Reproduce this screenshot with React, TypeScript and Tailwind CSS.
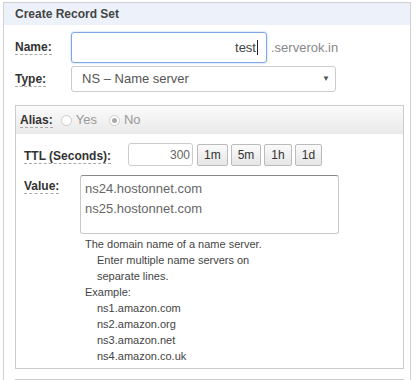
import React from "react";

function Label({ children }: { children: React.ReactNode }) {
  return (
    <span className="font-bold text-[12px] text-[#333] border-b border-dashed border-[#aaa] leading-[14px]">
      {children}
    </span>
  );
}

function Btn({ children }: { children: React.ReactNode }) {
  return (
    <div className="h-[22px] px-[6px] flex items-center border border-[#bbb] rounded-[2px] bg-gradient-to-b from-[#fafafa] to-[#e6e6e6] text-[12px] text-[#333]">
      {children}
    </div>
  );
}

export default function App() {
  return (
    <div className="w-[416px] h-[380px] bg-white overflow-hidden font-['Liberation_Sans',Arial,sans-serif]">
      <div className="ml-[3px] mt-[2px] w-[408px] h-[400px] border border-[#d0d0d0]">
        <div className="h-[22px] bg-[#edf2fa] pl-[11px] flex items-center text-[12px] font-bold text-[#444]">
          Create Record Set
        </div>
        <div className="pl-[11px] pt-[7px]">
          <div className="flex items-center h-[31px]">
            <div className="w-[56px] flex items-center">
              <Label>Name:</Label>
            </div>
            <div className="w-[196px] h-[31px] border border-[#7ea7e8] rounded-[3px] shadow-[0_0_2px_#9dbff0] flex items-center justify-end pr-[8px] text-[13px] text-[#444]">
              test<span className="w-px h-[15px] bg-[#222] ml-[1px]" />
            </div>
            <span className="ml-[4px] text-[13px] text-[#888]">.serverok.in</span>
          </div>
          <div className="flex items-center mt-[3px] h-[26px]">
            <div className="w-[56px] flex items-center">
              <Label>Type:</Label>
            </div>
            <div className="w-[265px] h-[26px] border border-[#ccc] rounded-[3px] flex items-center justify-between pl-[10px] pr-[5px] text-[13px] text-[#555]">
              <span>NS – Name server</span>
              <span className="text-[8px] text-[#555]">▼</span>
            </div>
          </div>
          <div className="mt-[13px] w-[389px] h-[264px] border border-[#ccc]">
            <div className="h-[28px] bg-gradient-to-b from-[#fbfbfb] to-[#e9e9e9] flex items-center pl-[4px] text-[13px] text-[#999]">
              <Label>Alias:</Label>
              <span className="ml-[8px] w-[11px] h-[11px] rounded-full border border-[#ccc] bg-white" />
              <span className="ml-[4px]">Yes</span>
              <span className="ml-[12px] w-[11px] h-[11px] rounded-full border border-[#ccc] bg-white flex items-center justify-center">
                <span className="w-[5px] h-[5px] rounded-full bg-[#aaa]" />
              </span>
              <span className="ml-[4px]">No</span>
            </div>
            <div className="pl-[8px] pt-[9px]">
              <div className="flex items-center h-[23px]">
                <div className="w-[104px] flex items-center pt-[3px]">
                  <Label>TTL (Seconds):</Label>
                </div>
                <div className="w-[65px] h-[23px] border border-[#ccc] rounded-[3px] flex items-center justify-end pr-[2px] text-[12px] text-[#666]">
                  300
                </div>
                <div className="flex gap-[3px] ml-[4px]">
                  <Btn>1m</Btn>
                  <Btn>5m</Btn>
                  <Btn>1h</Btn>
                  <Btn>1d</Btn>
                </div>
              </div>
              <div className="flex mt-[9px]">
                <div className="w-[56px] -mt-[2px]">
                  <Label>Value:</Label>
                </div>
                <div>
                  <div className="w-[259px] h-[59px] border border-[#c8c8c8] border-t-[#888] rounded-[3px] pl-[4px] pt-[3px] text-[13px] leading-[20px] text-[#666]">
                    <div>ns24.hostonnet.com</div>
                    <div>ns25.hostonnet.com</div>
                  </div>
                  <div className="pl-[5px] pt-[2px] text-[11px] leading-[16px] text-[#444]">
                    <div>The domain name of a name server.</div>
                    <div className="pl-[12px]">Enter multiple name servers on</div>
                    <div className="pl-[12px]">separate lines.</div>
                    <div>Example:</div>
                    <div className="pl-[12px]">ns1.amazon.com</div>
                    <div className="pl-[12px]">ns2.amazon.org</div>
                    <div className="pl-[12px]">ns3.amazon.net</div>
                    <div className="pl-[12px]">ns4.amazon.co.uk</div>
                  </div>
                </div>
              </div>
            </div>
          </div>
          <div className="mt-[10px] w-[389px] h-[40px] border-t border-[#ccc]" />
        </div>
      </div>
    </div>
  );
}
